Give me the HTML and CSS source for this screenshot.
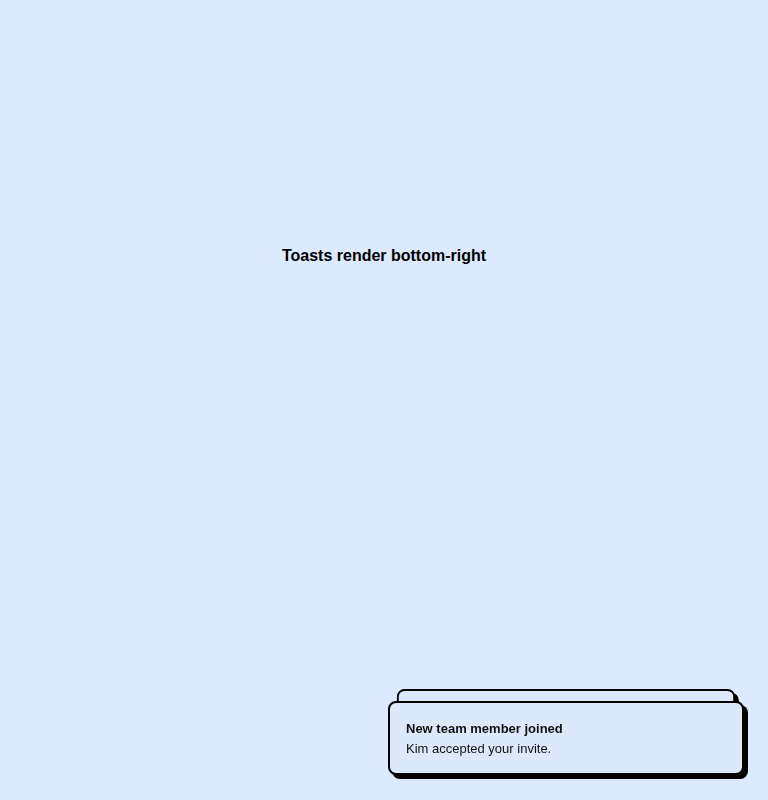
FILE: index.html
```html
<!DOCTYPE html>
<html lang="en">
<head>
<meta charset="utf-8">
<title>Toasts</title>
<link rel="stylesheet" href="styles.css">
</head>
<body>
<main class="stage">
  <h1 class="stage-title">Toasts render bottom-right</h1>
</main>
<section class="toaster" aria-live="polite">
  <div class="toast toast-back" aria-hidden="true"></div>
  <div class="toast toast-front">
    <div class="toast-title">New team member joined</div>
    <div class="toast-body">Kim accepted your invite.</div>
  </div>
</section>
</body>
</html>
```
FILE: styles.css
```css
html, body {
  margin: 0;
  padding: 0;
  background: #dbeafe;
  font-family: "Liberation Sans", Arial, sans-serif;
  color: #000;
}
.stage {
  padding-top: 247px;
  text-align: center;
}
.stage-title {
  margin: 0;
  font-size: 16px;
  line-height: 18px;
  font-weight: 700;
}
.toaster {
  position: fixed;
  right: 24px;
  bottom: 25px;
  width: 356px;
}
.toast {
  box-sizing: border-box;
  width: 356px;
  background: #dce9fd;
  border: 2px solid #000;
  border-radius: 8px;
  box-shadow: 4px 4px 0 #000;
}
.toast-back {
  position: absolute;
  left: 0;
  top: 0;
  height: 74px;
  transform-origin: top center;
  transform: translateY(-12px) scale(0.95);
}
.toast-front {
  position: relative;
  padding: 17px 16px 15px;
  display: flex;
  flex-direction: column;
  gap: 2px;
  font-size: 13px;
  line-height: 18px;
  color: #111;
}
.toast-title {
  font-weight: 700;
}
```
